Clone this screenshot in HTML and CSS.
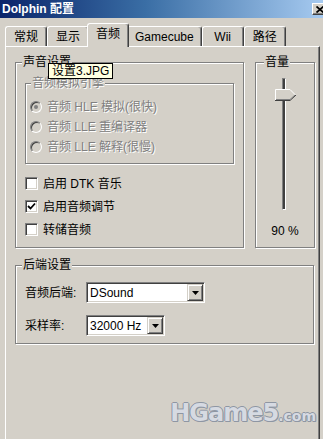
FILE: index.html
```html
<!DOCTYPE html>
<html lang="zh-CN">
<head>
    <meta charset="UTF-8">
    <title>Dolphin 配置</title>
    <link rel="stylesheet" href="styles.css">
</head>
<body>

    <div class="window">
        <div class="titlebar">
            <span class="title">Dolphin 配置</span>
            <span class="close">
                <svg width="8" height="7" viewBox="0 0 8 7"><path d="M0.5 0.5 L7.5 6.5 M7.5 0.5 L0.5 6.5" stroke="#000" stroke-width="1.8" fill="none"/></svg>
            </span>
        </div>

        <div class="tabs">
            <span class="tab">常规</span>
            <span class="tab">显示</span>
            <span class="tab active">音频</span>
            <span class="tab">Gamecube</span>
            <span class="tab">Wii</span>
            <span class="tab">路径</span>
        </div>

        <div class="panel">
            <div class="top-row">
                <fieldset class="group sound">
                    <legend>声音设置</legend>

                    <fieldset class="group engine">
                        <legend>音频模拟引擎</legend>
                        <div class="radio"><span class="dot checked"></span>音频 HLE 模拟(很快)</div>
                        <div class="radio"><span class="dot"></span>音频 LLE 重编译器</div>
                        <div class="radio"><span class="dot"></span>音频 LLE 解释(很慢)</div>
                    </fieldset>

                    <div class="checks">
                        <div class="check"><span class="box"></span>启用 DTK 音乐</div>
                        <div class="check"><span class="box"><svg width="9" height="9" viewBox="0 0 9 9"><path d="M1 4 L3.5 6.5 L8 1.5" stroke="#000" stroke-width="1.8" fill="none"/></svg></span>启用音频调节</div>
                        <div class="check"><span class="box"></span>转储音频</div>
                    </div>
                </fieldset>

                <fieldset class="group volume">
                    <legend>音量</legend>
                    <div class="slider">
                        <div class="track"></div>
                        <!-- 90% -->
                        <svg class="thumb" style="top: 11px;" width="22" height="12" viewBox="0 0 22 12">
                            <polygon points="0,0 15,0 21,6 15,11 0,11" fill="#d4d0c8"/>
                            <polyline points="0.5,11 0.5,0.5 15,0.5 20.5,6" stroke="#fff" fill="none"/>
                            <polyline points="0,11.5 15,11.5 21,6" stroke="#404040" fill="none"/>
                            <polyline points="1,10.5 15,10.5 20,6" stroke="#808080" fill="none"/>
                        </svg>
                    </div>
                    <div class="percent">90 %</div>
                </fieldset>
            </div>

            <fieldset class="group backend">
                <legend>后端设置</legend>
                <div class="field">
                    <span class="field-label">音频后端:</span>
                    <div class="select wide">
                        <span>DSound</span>
                        <span class="arrow"><svg width="7" height="4" viewBox="0 0 7 4"><polygon points="0,0 7,0 3.5,4" fill="#000"/></svg></span>
                    </div>
                </div>
                <div class="field">
                    <span class="field-label">采样率:</span>
                    <div class="select narrow">
                        <span>32000 Hz</span>
                        <span class="arrow"><svg width="7" height="4" viewBox="0 0 7 4"><polygon points="0,0 7,0 3.5,4" fill="#000"/></svg></span>
                    </div>
                </div>
            </fieldset>

            <div class="tooltip">设置3.JPG</div>
        </div>

        <div class="watermark">HGame5<small>.com</small></div>
    </div>

</body>
</html>
```

FILE: styles.css
```css
* {
    box-sizing: border-box;
}

body {
    margin: 0;
    background-color: #d4d0c8;
    font-family: "Liberation Sans", "Noto Sans CJK SC", sans-serif;
    font-size: 12px;
    line-height: 14px;
    color: #000;
    overflow: hidden;
}

.window {
    position: relative;
    width: 323px;
    height: 439px;
    overflow: hidden;
}

/* title bar */
.titlebar {
    height: 18px;
    display: flex;
    align-items: center;
    justify-content: space-between;
    padding-left: 2px;
    background: linear-gradient(to right, #0a246a, #3a6ea5 45%, #a6caf0);
}

.title {
    color: #fff;
    font-weight: bold;
}

.close {
    width: 15px;
    height: 12px;
    margin-right: -4px;
    display: flex;
    align-items: center;
    justify-content: center;
    background-color: #d4d0c8;
    border: 1px solid;
    border-color: #fff #404040 #404040 #fff;
    box-shadow: inset -1px -1px 0 #808080;
}

/* tabs */
.tabs {
    display: flex;
    align-items: flex-end;
    height: 23px;
    margin-top: 5px;
    padding-left: 5px;
}

.tab {
    height: 20px;
    min-width: 42px;
    padding: 0 7px;
    display: flex;
    align-items: center;
    justify-content: center;
    border: 1px solid;
    border-bottom: none;
    border-color: #fff #404040 transparent #fff;
    border-radius: 3px 3px 0 0;
    box-shadow: inset -1px 0 0 #808080;
}

.tab.active {
    height: 24px;
    margin: 0 -2px -1px;
    padding-bottom: 3px;
    position: relative;
    z-index: 1;
    background-color: #d4d0c8;
}

.panel {
    position: relative;
    width: 315px;
    height: 420px;
    margin-left: 5px;
    padding: 8px 0 0 9px;
    border: 1px solid;
    border-color: #fff #404040 #404040 #fff;
    box-shadow: inset -1px -1px 0 #808080;
}

/* group boxes */
.group {
    margin: 0;
    min-width: 0;
    border: 1px solid #808080;
    box-shadow: inset 1px 1px 0 #fff, 1px 1px 0 #fff;
}

.group legend {
    padding: 0 1px;
    background-color: #d4d0c8;
    line-height: 14px;
}

.top-row {
    display: flex;
    gap: 11px;
}

.sound {
    width: 229px;
    padding: 7px 9px 6px;
}

.sound > legend {
    margin-left: -3px;
}

.engine {
    padding: 7px 4px 6px;
}

.engine legend {
    margin-left: 1px;
    color: #808080;
    text-shadow: 1px 1px 0 #fff;
}

.radio {
    height: 20px;
    display: flex;
    align-items: center;
    gap: 5px;
    color: #808080;
    text-shadow: 1px 1px 0 #fff;
}

.dot {
    width: 12px;
    height: 12px;
    display: flex;
    align-items: center;
    justify-content: center;
    border-radius: 50%;
    border: 1px solid;
    border-color: #808080 #fff #fff #808080;
    box-shadow: inset 1px 1px 0 #404040;
    background-color: #d4d0c8;
}

.dot.checked::after {
    content: "";
    width: 4px;
    height: 4px;
    border-radius: 50%;
    background-color: #808080;
}

.checks {
    margin-top: 8px;
}

.check {
    height: 23px;
    display: flex;
    align-items: center;
    gap: 5px;
}

.box {
    width: 13px;
    height: 13px;
    display: flex;
    align-items: center;
    justify-content: center;
    background-color: #fff;
    border: 1px solid;
    border-color: #808080 #fff #fff #808080;
    box-shadow: inset 1px 1px 0 #404040, inset -1px -1px 0 #d4d0c8;
}

/* volume */
.volume {
    width: 60px;
    padding: 0;
}

.volume legend {
    margin-left: 8px;
}

.slider {
    position: relative;
    width: 22px;
    height: 132px;
    margin: 9px 0 0 19px;
}

.track {
    width: 4px;
    height: 132px;
    margin-left: 7px;
    background-color: #404040;
    border: 1px solid;
    border-color: #808080 #fff #fff #808080;
}

.thumb {
    position: absolute;
    left: 0;
}

.percent {
    margin-top: 14px;
    text-align: center;
}

/* backend */
.backend {
    width: 299px;
    margin-top: 10px;
    padding: 10px 9px 7px;
}

.backend legend {
    margin-left: -3px;
}

.field {
    display: flex;
    align-items: center;
}

.field + .field {
    margin-top: 12px;
}

.field-label {
    width: 61px;
}

.select {
    height: 21px;
    display: flex;
    align-items: center;
    padding-left: 3px;
    background-color: #fff;
    border: 1px solid;
    border-color: #808080 #fff #fff #808080;
    box-shadow: inset 1px 1px 0 #404040, inset -1px -1px 0 #d4d0c8;
}

.select.wide {
    width: 119px;
}

.select.narrow {
    width: 79px;
}

.arrow {
    width: 16px;
    height: 17px;
    margin-left: auto;
    margin-right: 1px;
    display: flex;
    align-items: center;
    justify-content: center;
    background-color: #d4d0c8;
    border: 1px solid;
    border-color: #d4d0c8 #404040 #404040 #d4d0c8;
    box-shadow: inset 1px 1px 0 #fff, inset -1px -1px 0 #808080;
}

/* tooltip over the group box */
.tooltip {
    position: absolute;
    left: 42px;
    top: 16px;
    height: 16px;
    padding: 0 3px;
    border: 1px solid #000;
    background-color: #ffffe1;
    z-index: 2;
}

.watermark {
    position: absolute;
    right: 7px;
    top: 399px;
    font-family: "DejaVu Sans", sans-serif;
    font-weight: bold;
    font-size: 24px;
    line-height: 28px;
    letter-spacing: -1px;
    color: #d6dae2;
    text-shadow: 1px 0 #8e96a3, -1px 0 #8e96a3, 0 1px #8e96a3, 0 -1px #8e96a3, 1px 1px #8e96a3;
}

.watermark small {
    font-size: 14px;
    letter-spacing: 0;
}
```
